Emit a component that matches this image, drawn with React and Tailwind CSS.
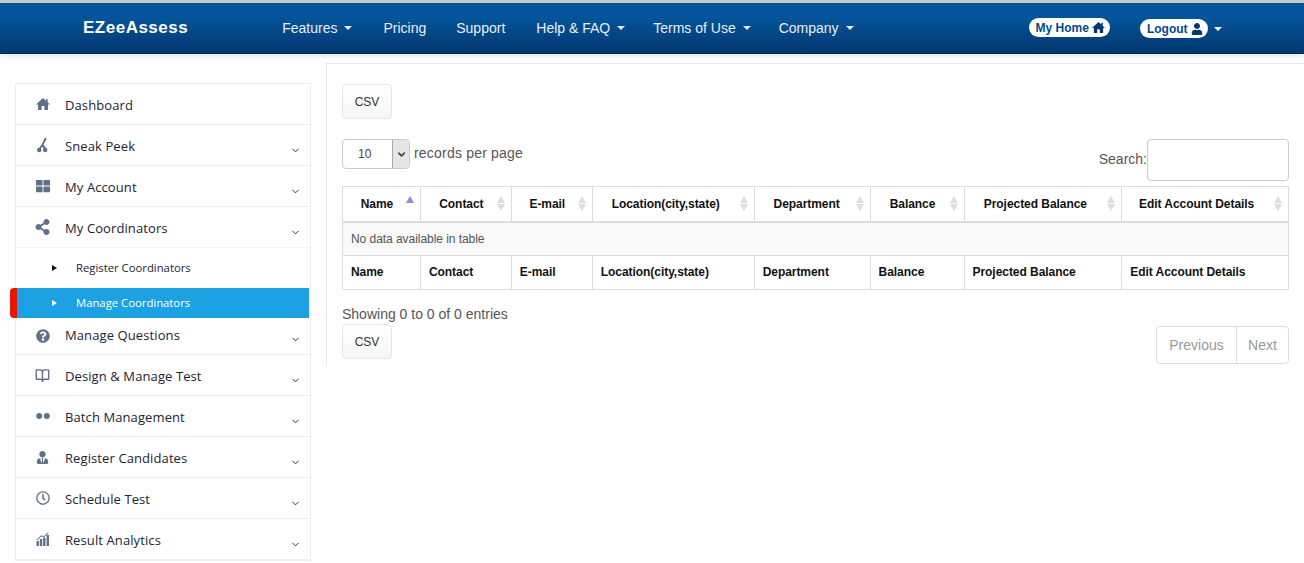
import { FaUser, FaShareAlt, FaThLarge, FaQuestionCircle, FaUserTie, FaRegClock } from 'react-icons/fa';
import { ChevronDown, BookOpen } from 'lucide-react';

const navLinks = [
  { label: 'Features', caret: true, className: 'ml-[94px]' },
  { label: 'Pricing', className: 'ml-[31px]' },
  { label: 'Support', className: 'ml-[30px]' },
  { label: 'Help & FAQ', caret: true, className: 'ml-[31px]' },
  { label: 'Terms of Use', caret: true, className: 'ml-[28px]' },
  { label: 'Company', caret: true, className: 'ml-[28px]' },
];

const columns = [
  { name: 'Name', width: 'w-[78px]', pad: 'pr-[17px]', sort: 'asc' },
  { name: 'Contact', width: 'w-[91px]', pad: 'pr-[17px]' },
  { name: 'E-mail', width: 'w-[81px]', pad: 'pr-[17px]' },
  { name: 'Location(city,state)', width: 'w-[162px]', pad: 'pr-[23px]' },
  { name: 'Department', width: 'w-[116px]', pad: 'pr-[19px]' },
  { name: 'Balance', width: 'w-[94px]', pad: 'pr-[17px]' },
  { name: 'Projected Balance', width: 'w-[158px]', pad: 'pr-[23px]' },
  { name: 'Edit Account Details', width: 'w-[167px]', pad: 'pr-[25px]' },
];

function Caret({ className = '' }) {
  return <span className={`inline-block border-x-4 border-t-4 border-x-transparent border-t-current ${className}`} />;
}

function HomeIcon({ size = 14, className = '' }) {
  return (
    <svg width={size} height={size} viewBox="0 0 14 14" fill="currentColor" className={className}>
      <path d="M7 1 L0 7.6 L2 7.6 L2 13 L5.6 13 L5.6 9 L8.4 9 L8.4 13 L12 13 L12 7.6 L14 7.6 L11.6 5.3 L11.6 2 L10 2 L10 3.8 Z" />
    </svg>
  );
}

function SneakIcon() {
  return (
    <svg width="14" height="16" viewBox="0 0 14 16" fill="none" stroke="currentColor" strokeWidth="2">
      <path d="M9.5 1 C9.5 4 7 5 6.5 8 L3.5 12 M6.5 8 C7.5 9 9 10 9 12.5" />
      <circle cx="3.2" cy="13" r="1.2" fill="currentColor" />
      <circle cx="9.2" cy="13" r="1.2" fill="currentColor" />
    </svg>
  );
}

function DotsIcon() {
  return (
    <svg width="14" height="8" viewBox="0 0 14 8" fill="currentColor">
      <circle cx="3.2" cy="4" r="3" />
      <circle cx="10.8" cy="4" r="3" />
    </svg>
  );
}

function ChartIcon() {
  return (
    <svg width="14" height="14" viewBox="0 0 14 14" fill="currentColor">
      <rect x="0.5" y="9" width="2.4" height="5" />
      <rect x="3.8" y="7" width="2.4" height="7" />
      <rect x="7.1" y="5.5" width="2.4" height="8.5" />
      <rect x="10.6" y="3" width="2.4" height="11" />
      <path d="M0.5 7.5 L5 3.5 L8 4 L12 0.5 L12.6 1.2 L8.3 5 L5.3 4.5 L1 8.3 Z" />
    </svg>
  );
}

function SideItem({ icon, label, chevron = true, rowClass = 'h-[41px] border-b border-[#eeeeee]', textClass = 'mt-[3px]', chevronClass = 'top-[20px]' }) {
  return (
    <div className={`relative flex items-center pl-[19px] pr-[10px] ${rowClass}`}>
      <span className="flex w-[15px] justify-center text-[#5f7088]">{icon}</span>
      <span className={`ml-[15px] text-[13px] tracking-[0.1px] text-[#222233] ${textClass}`}>{label}</span>
      {chevron && <ChevronDown size={11} strokeWidth={2} className={`absolute right-[9px] text-[#222] ${chevronClass}`} />}
    </div>
  );
}

function SortArrows({ active }) {
  return (
    <span className="absolute right-[6px] top-[9px] flex flex-col gap-[1px]">
      <span className={`border-x-[4px] border-b-[7px] border-x-transparent ${active ? 'border-b-[#8a8ee0]' : 'border-b-[#dddddd]'}`} />
      {!active && <span className="border-x-[4px] border-t-[7px] border-x-transparent border-t-[#dddddd]" />}
    </span>
  );
}

function CsvButton() {
  return (
    <button type="button" className="h-[35px] w-[50px] rounded-[4px] border border-[#e6e6e6] bg-gradient-to-b from-white to-[#f6f6f6] text-[12px] text-[#333]">
      CSV
    </button>
  );
}

export default function App() {
  return (
    <div className="h-[563px] w-[1304px] overflow-hidden bg-white font-['Liberation_Sans',Arial,sans-serif]">
      <header className="relative z-10 flex h-[54px] items-center border-t-[3px] border-b border-t-[#c9c9c9] border-b-[#012a52] bg-gradient-to-b from-[#045499] from-30% to-[#03376f] text-white shadow-[0_2px_6px_rgba(0,0,0,0.12)]">
        <span className="ml-[83px] text-[17px] font-bold tracking-[0.5px]">EZeeAssess</span>
        {navLinks.map((link) => (
          <span key={link.label} className={`flex items-center text-[14px] text-[#e8eef5] ${link.className}`}>
            {link.label}
            {link.caret && <Caret className="ml-[7px]" />}
          </span>
        ))}
        <span className="ml-[175px] -mt-[1px] flex h-[19px] items-center gap-[3px] rounded-full bg-white pl-[7px] pr-[5px] text-[12px] font-bold text-[#034a8c]">
          My Home <HomeIcon size={13} className="text-[#03376f]" />
        </span>
        <span className="ml-[30px] mt-[1px] flex h-[19px] items-center gap-[3px] rounded-full bg-white pl-[7px] pr-[5px] text-[12px] font-bold text-[#034a8c]">
          Logout <FaUser size={12} className="text-[#03376f]" />
        </span>
        <Caret className="ml-[6px] mt-[1px]" />
      </header>

      <div className="flex items-start">
        <aside className="relative ml-[15px] mt-[29px] w-[296px] shrink-0 border-x border-t border-b-2 border-[#eeeeee] font-['Open_Sans',sans-serif]">
          <SideItem icon={<HomeIcon />} label="Dashboard" chevron={false} />
          <SideItem icon={<SneakIcon />} label="Sneak Peek" />
          <SideItem icon={<FaThLarge size={14} />} label="My Account" />
          <SideItem icon={<FaShareAlt size={16} />} label="My Coordinators" rowClass="h-[41px] border-b border-[#f6f6f6]" />
          <div className="flex h-[40px] items-center pl-[36px] text-[11.3px] text-[#222233]">
            <span className="border-y-[3px] border-l-[5px] border-y-transparent border-l-[#111]" />
            <span className="ml-[19px]">Register Coordinators</span>
          </div>
          <div className="relative flex h-[30px] w-[293px] items-center bg-[#1ca1e2] pl-[36px] text-[11.3px] text-white">
            <span className="absolute -left-[6px] top-0 h-[30px] w-[7px] rounded-l-[4px] bg-[#e81500]" />
            <span className="border-y-[3px] border-l-[5px] border-y-transparent border-l-white" />
            <span className="ml-[19px]">Manage Coordinators</span>
          </div>
          <SideItem
            icon={<FaQuestionCircle size={14} />}
            label="Manage Questions"
            rowClass="h-[37px] border-b border-[#eeeeee]"
            textClass="-mt-[1px]"
            chevronClass="top-[16px]"
          />
          <SideItem icon={<BookOpen size={15} strokeWidth={2.2} />} label="Design & Manage Test" />
          <SideItem icon={<DotsIcon />} label="Batch Management" />
          <SideItem icon={<FaUserTie size={13} />} label="Register Candidates" />
          <SideItem icon={<FaRegClock size={14} />} label="Schedule Test" />
          <SideItem icon={<ChartIcon />} label="Result Analytics" rowClass="h-[40px]" />
        </aside>

        <main className="ml-[15px] mt-[9px] h-[303px] flex-1 border-l border-t border-[#e6e6e6] pl-[15px] pr-[15px] pt-[20px] text-[#555]">
          <CsvButton />

          <div className="mt-[20px] flex h-[47px] items-start justify-between">
            <div className="flex items-start">
              <div className="flex h-[30px] w-[68px] overflow-hidden rounded-[4px] border border-[#cccccc] text-[12px] text-[#444]">
                <span className="flex-1 pl-[15px] leading-[28px]">10</span>
                <span className="flex w-[17px] items-center justify-center border-l border-[#aaaaaa] bg-[#e6e6e6]">
                  <ChevronDown size={11} strokeWidth={3.5} className="text-[#444]" />
                </span>
              </div>
              <span className="ml-[4px] mt-[4px] text-[14px] tracking-[0.2px]">records per page</span>
            </div>
            <div className="flex items-start">
              <span className="mt-[10px] text-[14px]">Search:</span>
              <div className="h-[42px] w-[142px] rounded-[4px] border border-[#cccccc]" />
            </div>
          </div>

          <table className="table-fixed border-collapse text-[12px] tracking-[-0.05px] text-[#111]">
            <thead>
              <tr>
                {columns.map((col) => (
                  <th key={col.name} className={`relative h-[35px] border border-b-2 border-[#dddddd] pl-[8px] text-center font-bold ${col.pad} ${col.width}`}>
                    {col.name}
                    <SortArrows active={col.sort === 'asc'} />
                  </th>
                ))}
              </tr>
            </thead>
            <tbody>
              <tr>
                <td colSpan={8} className="h-[34px] border border-[#dddddd] bg-[#f9f9f9] pl-[8px] text-[#555]">
                  No data available in table
                </td>
              </tr>
            </tbody>
            <tfoot>
              <tr>
                {columns.map((col) => (
                  <th key={col.name} className="h-[34px] border border-[#dddddd] pb-[2px] pl-[8px] text-left font-bold">
                    {col.name}
                  </th>
                ))}
              </tr>
            </tfoot>
          </table>

          <div className="mt-[16px] text-[14px] leading-[16px]">Showing 0 to 0 of 0 entries</div>
          <div className="mt-[2px] flex items-start justify-between">
            <CsvButton />
            <div className="mt-[2px] flex h-[38px] rounded-[4px] border border-[#dddddd] text-[14px] text-[#999]">
              <span className="flex w-[80px] items-center justify-center border-r border-[#dddddd]">Previous</span>
              <span className="flex w-[51px] items-center justify-center">Next</span>
            </div>
          </div>
        </main>
      </div>
    </div>
  );
}
